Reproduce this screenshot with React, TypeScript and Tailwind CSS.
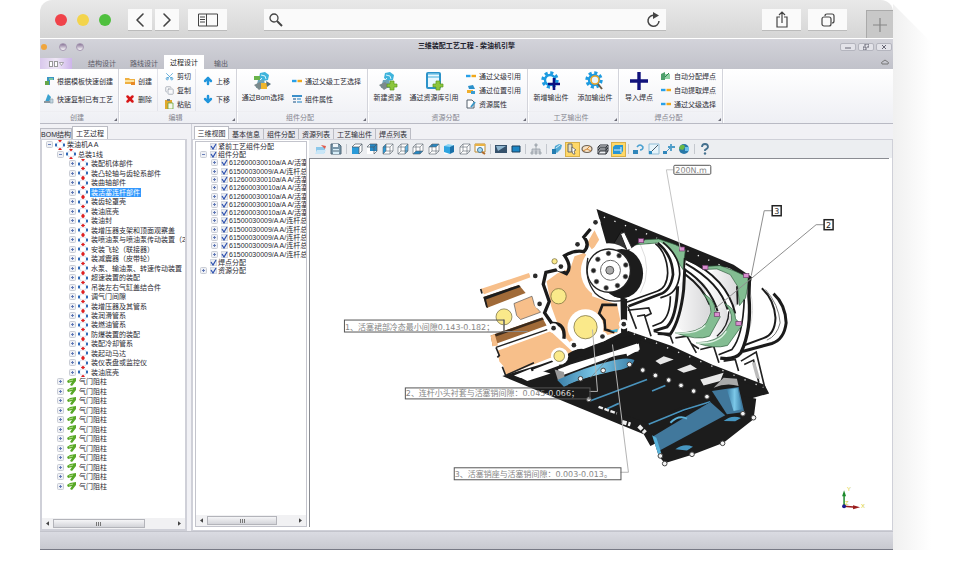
import type { ReactNode } from "react";
import { Copy, Scissors, ChevronLeft, ChevronRight, X, ArrowUp, ArrowDown } from "lucide-react";

const processRows = [
  "装配机体部件",
  "装凸轮轴与齿轮系部件",
  "装曲轴部件",
  "装活塞连杆部件",
  "装齿轮罩壳",
  "装油底壳",
  "装油封",
  "装增压器支架和顶面观察盖",
  "装喷油泵与喷油泵传动装置（2",
  "安装飞轮（联接器）",
  "装减震器（皮带轮）",
  "水泵、输油泵、转速传动装置",
  "超速装置的装配",
  "吊装左右气缸盖结合件",
  "调气门间隙",
  "装增压器及其管系",
  "装润滑管系",
  "装燃油管系",
  "防爆装置的装配",
  "装配冷却管系",
  "装起动马达",
  "装仪表盘或监控仪",
  "装油底壳",
];
const valveRows = Array.from({ length: 12 }, () => "气门阻柱");

const piston = "612600030010a/A A/活塞";
const rod = "61500030009/A A/连杆总";
const partRows = [piston, rod, piston, piston, piston, piston, piston, rod, rod, rod, rod, rod];

const viewTabs = ["三维视图", "基本信息", "组件分配", "资源列表", "工艺输出件", "焊点列表"];

/* ---------- icons ---------- */

function GearIcon({ mark }: { mark: "plus" | "lens" }) {
  return (
    <svg viewBox="0 0 20 20" className="size-5">
      <circle cx="9" cy="9" r="7" fill="none" stroke="#1e9be0" strokeWidth="3.4" strokeDasharray="3 2.5" />
      <circle cx="9" cy="9" r="5" fill="#fff" stroke="#1e9be0" strokeWidth="2.4" />
      {mark === "plus" ? (
        <path d="M13 7v12M7 13h12" stroke="#0b1080" strokeWidth="2.600" />
      ) : (
        <>
          <circle cx="10" cy="9" r="4" fill="#e9f6fd" stroke="#eaa528" strokeWidth="1.600" />
          <path d="M13 13l4 5" stroke="#6c5a42" strokeWidth="2" />
        </>
      )}
    </svg>
  );
}

function RobotIcon({ plus }: { plus?: boolean }) {
  return (
    <svg viewBox="0 0 20 20" className="size-5">
      <path d="M7 2l5-1 4 3-1 5-5 1-4-3z" fill="#3fb4dc" />
      <path d="M8 4l4 1 1 3M6 10l3-3" fill="none" stroke="#d7f3fb" />
      <path d="M5 9h6l2 8H3z" fill="#6fa5b8" />
      <path d="M1 14l6-3 5 4-6 4z" fill="#7b8a8c" />
      {plus ? (
        <path d="M12 10h4v3h3v3h-3v3h-4v-3H9v-3h3z" fill="#8cc63c" stroke="#5d9a1c" strokeWidth=".7" />
      ) : (
        <>
          <path d="M1 5h6v4H1z" fill="#69b34a" />
          <path d="M8 12h6v6H8z" fill="#f0b62c" />
          <path d="M13 10l5 3-4 3z" fill="#58707c" />
        </>
      )}
    </svg>
  );
}

function LibraryIcon() {
  return (
    <svg viewBox="0 0 20 20" className="size-5">
      <rect x="2" y="1" width="15" height="17" rx="2" fill="#2c93c9" />
      <rect x="4" y="3" width="11" height="13" fill="#eaf8fe" />
      <path d="M4 6h11M4 3h11" stroke="#7cc6e8" strokeWidth="1.500" />
      <path d="M12 10h4v3h3v3h-3v3h-4v-3H9v-3h3z" fill="#8cc63c" stroke="#5d9a1c" strokeWidth=".7" />
    </svg>
  );
}

function PlusIcon() {
  return (
    <svg viewBox="0 0 20 20" className="size-5">
      <path d="M10 1v18M1 10h18" stroke="#11127c" strokeWidth="3.400" />
    </svg>
  );
}

function LinkDash() {
  return (
    <svg viewBox="0 0 10 10" className="size-[10px]">
      <path d="M0 5h4.500" stroke="#28a0e8" strokeWidth="2.400" />
      <path d="M5.500 5H10" stroke="#f0a81c" strokeWidth="2.400" />
    </svg>
  );
}

function SheetIcon({ tone }: { tone: "green" | "blue" | "folder" | "paste" | "edit" | "list" | "place" | "weld" }) {
  return (
    <svg viewBox="0 0 10 10" className="size-[10px]">
      {tone === "green" && (
        <>
          <path d="M3 1h7v3H6v5H3z" fill="#3a95c4" />
          <path d="M5 2h4v2H5z" fill="#7cc4a0" />
          <path d="M1 5h4v4H1z" fill="#66a648" />
        </>
      )}
      {tone === "weld" && (
        <>
          <path d="M0 3l4-2v8H0z" fill="#4f9f6c" />
          <path d="M4 3h5v5H4z" fill="#8fd0a4" />
          <path d="M4 6l4-4" stroke="#2f7d4c" />
        </>
      )}
      {tone === "blue" && (
        <>
          <path d="M4 0l3 3-2 5H1z" fill="#3aa2d0" />
          <path d="M0 7h7v2H0z" fill="#8c979e" />
          <path d="M6 5h3v4H6z" fill="#c3d6e2" stroke="#7f97a6" strokeWidth=".6" />
        </>
      )}
      {tone === "folder" && (
        <>
          <path d="M0 2h4l1 1h5v5H0z" fill="#efb041" />
          <path d="M0 4h9v2H0z" fill="#fbe2a0" />
          <path d="M6 6h4v3H6z" fill="#e88a28" />
        </>
      )}
      {tone === "paste" && (
        <>
          <path d="M1 1h7v9H1z" fill="#e0a92e" />
          <path d="M3 0h3v2H3z" fill="#77808a" />
          <path d="M4 4h5v6H4z" fill="#f5f8e8" stroke="#6ca33b" strokeWidth=".8" />
        </>
      )}
      {tone === "edit" && (
        <>
          <path d="M1 1h5l2 2v6H1z" fill="#fff" stroke="#55606c" />
          <path d="M9 3L5 8" stroke="#3b97c7" strokeWidth="2" />
        </>
      )}
      {tone === "list" && (
        <>
          <path d="M0 1h10v2H0z" fill="#3b8fca" />
          <path d="M1 5h3M1 8h3" stroke="#5d84a8" strokeWidth="1.500" />
          <path d="M5 4h4v2H5zM5 7h5v2H5z" fill="#85b9dc" />
        </>
      )}
      {tone === "place" && (
        <>
          <path d="M2 1l5-1 2 4H3z" fill="#2b90ca" />
          <path d="M1 5h6v3H1z" fill="#f0ae2b" />
          <path d="M5 6h4v3H5z" fill="#3a9cd2" />
        </>
      )}
    </svg>
  );
}

function PartIcon() {
  return (
    <svg viewBox="0 0 10 10" className="h-[10px] w-[10px] shrink-0">
      <circle cx="5" cy="5" r="3.500" fill="#fff" stroke="#c3d2ea" strokeWidth=".7" />
      <ellipse cx="1" cy="5" rx="1" ry="1.700" fill="#1d5cb0" />
      <ellipse cx="9" cy="5" rx="1" ry="1.700" fill="#1d5cb0" />
      <path d="M3 0h4L5 2.500zM3 10h4L5 7.500z" fill="#e02020" />
    </svg>
  );
}

function LeafIcon() {
  return (
    <svg viewBox="0 0 10 10" className="h-[10px] w-[10px] shrink-0">
      <path d="M1 4l3-2 6-1v3L6 9 4 8l2-3-4 1z" fill="#58a827" />
      <path d="M3 4l4-1" stroke="#b5df8a" />
    </svg>
  );
}

function CubeIcon({ face }: { face: string }) {
  return (
    <svg viewBox="0 0 12 12" className="size-3">
      <path d="M1 4l3-3h7v7l-3 3H1z" fill="#fff" />
      {face === "front" && <path d="M1 4h7v7H1z" fill="#2a9ad8" />}
      {face === "back" && <path d="M4 1h7v7H4z" fill="#2588c4" />}
      {face === "left" && <path d="M1 4l3-3v7l-3 3z" fill="#2a9ad8" />}
      {face === "right" && <path d="M8 4l3-3v7l-3 3z" fill="#62b4e0" />}
      {face === "bottom" && <path d="M1 11l3-3h7l-3 3z" fill="#2588c4" />}
      {face === "top" && <path d="M1 4l3-3h7L8 4z" fill="#2588c4" />}
      {face === "solid" && (
        <>
          <path d="M1 3h6v8L1 9z" fill="#2ea4e0" />
          <path d="M7 3l4-1v7l-4 2z" fill="#1a70a8" />
          <path d="M1 3l4-2 6 1-4 2z" fill="#8ad2f2" />
        </>
      )}
      {(face === "front" || face === "back") && (
        <path d="M1 4l3-3h7L8 4zM8 4v7l3-3V1" fill="none" stroke="#4c5761" strokeWidth=".7" />
      )}
      {!["solid", "front", "back"].includes(face) && (
        <path d="M1 4h7v7H1zM1 4l3-3h7L8 4M11 1v7l-3 3M4 1v7h7M4 8l-3 3" fill="none" stroke="#59636d" strokeWidth=".6" />
      )}
    </svg>
  );
}

function ToolIcon({ name }: { name: string }) {
  return (
    <svg viewBox="0 0 12 12" className="size-3">
      {name === "open" && (
        <>
          <path d="M1 4h9v6H1z" fill="#8cc8ea" />
          <path d="M2 7h9l-2 4H0z" fill="#c9e6f7" />
          <path d="M6 2l5 1-1 3z" fill="#e05a4a" />
        </>
      )}
      {name === "save" && (
        <>
          <path d="M1 1h8l2 2v8H1z" fill="#7897aa" stroke="#4e6778" />
          <path d="M3 1h5v3H3z" fill="#f0f6fa" />
          <path d="M3 6h6v5H3z" fill="#d6edf8" />
          <path d="M3 8h6" stroke="#4e6778" />
        </>
      )}
      {name === "zoomwin" && (
        <>
          <path d="M1 1h10v8H1z" fill="#f4fbff" stroke="#c08c30" />
          <path d="M1 2h10" stroke="#e8b244" strokeWidth="2" />
          <circle cx="6" cy="7" r="2.500" fill="#a7dcf5" stroke="#477a98" />
          <path d="M8 9l3 2" stroke="#b06a28" strokeWidth="2" />
        </>
      )}
      {name === "screen" && (
        <>
          <path d="M0 2h12v8H0z" fill="#35516b" />
          <path d="M1 3h10L3 8z" fill="#8fb6cf" />
        </>
      )}
      {name === "box" && <path d="M2 3h8v6H2z" fill="#1c86c4" stroke="#1b3e5c" />}
      {name === "tree" && (
        <path d="M6 2v4M2 9V6h8v3M6 6v3M1 9h2v2H1zM5 9h2v2H5zM9 9h2v2H9zM5 1h2v2H5z" fill="#c8ccd2" stroke="#9ba1a8" strokeWidth=".8" />
      )}
      {name === "section" && (
        <>
          <path d="M4 3l4-2 3 1-1 4-4 4-3-2z" fill="#52aad4" />
          <path d="M1 6h4v5H1z" fill="#237cb0" />
          <path d="M5 5l4-3" stroke="#d6f0fc" />
        </>
      )}
      {name === "pick" && (
        <>
          <path d="M2 1h4v8H2z" fill="#e5e0c8" stroke="#666" />
          <path d="M6 4l4 3-2 1 1 3-2 0-1-3z" fill="#fff" stroke="#555" strokeWidth=".7" />
        </>
      )}
      {name === "orbit" && (
        <>
          <ellipse cx="6" cy="6" rx="5" ry="3.500" fill="#f6e1c4" stroke="#6d6256" strokeWidth="1.200" />
          <path d="M6 6l3-3M6 6L2 8M6 6l4 2" stroke="#d08a3c" />
        </>
      )}
      {name === "frame" && (
        <path d="M3 2h8L9 4H1zM3 5h8L9 7H1zM3 8h8l-2 3H1zM1 4v7M9 4v7M11 2v6" stroke="#30343a" fill="none" />
      )}
      {name === "wrap" && (
        <>
          <path d="M1 4l2-2h8v6l-2 3H1z" fill="#2795d4" />
          <path d="M2 7h7M9 4v6" stroke="#d7f1ff" />
        </>
      )}
      {name === "rotate" && (
        <>
          <path d="M0 7h5v4H0z" fill="#3186ba" />
          <path d="M4 4q3-4 6 0q0 3-3 3" fill="none" stroke="#4aa0d0" strokeWidth="1.500" />
        </>
      )}
      {name === "scale" && (
        <>
          <path d="M1 1h10v10H1z" fill="#e6f4fb" stroke="#90bdd6" />
          <path d="M2 10l8-8" stroke="#4b5b68" />
          <path d="M1 8h3v3H1z" fill="#2e8dc4" />
        </>
      )}
      {name === "move" && (
        <>
          <path d="M0 8h4v3H0z" fill="#3186ba" />
          <path d="M8 1v7M5 4h7" stroke="#4d9cc8" strokeWidth="1.800" />
          <path d="M4 8l3-3" stroke="#4d9cc8" />
        </>
      )}
      {name === "globe" && (
        <>
          <circle cx="6" cy="6" r="5" fill="#2878a8" />
          <path d="M2 3q4-3 5 1l-2 3-4-1z" fill="#6cba44" />
          <path d="M7 4h4v4H7z" fill="#6cc0ea" />
        </>
      )}
      {name === "help" && (
        <>
          <path d="M3 4q0-3 3-3t3 3q0 1-3 3v1" fill="none" stroke="#44708e" strokeWidth="1.800" />
          <circle cx="6" cy="10.500" r="1.200" fill="#44708e" />
        </>
      )}
    </svg>
  );
}

/* ---------- ribbon ---------- */

function Group({ label, className, children }: { label: string; className: string; children: ReactNode }) {
  return (
    <section className={`flex shrink-0 flex-col border-r border-[#d3d4db] shadow-[1px_0_0_#fff] ${className}`}>
      <div className="flex h-[43px]">{children}</div>
      <footer className="flex h-3 items-center border-t border-[#eeeef2] text-[#85858f]">
        <span className="flex-1 text-center">{label}</span>
        <svg viewBox="0 0 4 4" className="mt-1 mr-px size-[3px]">
          <path d="M4 0v4H0z" fill="#6d6d78" />
        </svg>
      </footer>
    </section>
  );
}

function Small({ icon, text }: { icon: ReactNode; text: string }) {
  return (
    <button className="flex flex-1 items-center gap-[3px] text-left">
      <span className="flex w-[10px] shrink-0 justify-center">{icon}</span>
      {text}
    </button>
  );
}

function Big({ icon, text, className }: { icon: ReactNode; text: string; className: string }) {
  return (
    <button className={`flex shrink-0 flex-col items-center gap-[2px] pt-[2px] ${className}`}>
      {icon}
      {text}
    </button>
  );
}

function Ribbon() {
  return (
    <div className="flex h-[55px] shrink-0 overflow-hidden border-b border-[#b9bac4] bg-linear-to-b from-white to-[#eeeff4]">
      <Group label="创建" className="w-[79px]">
        <div className="flex flex-col py-[3px] pl-1">
          <Small icon={<SheetIcon tone="green" />} text="根据模板快速创建" />
          <Small icon={<SheetIcon tone="blue" />} text="快速复制已有工艺" />
        </div>
      </Group>
      <Group label="编辑" className="w-[118px]">
        <div className="flex w-[39px] flex-col border-r border-[#e2e3ea] py-[3px] pl-[6px]">
          <Small icon={<SheetIcon tone="folder" />} text="创建" />
          <Small icon={<X className="size-[10px] text-[#d81818]" strokeWidth={6} />} text="删除" />
        </div>
        <div className="flex w-[38px] flex-col border-r border-[#e2e3ea] pl-[6px]">
          <Small icon={<Scissors className="size-[9px] -rotate-90 text-[#3d9bd2]" />} text="剪切" />
          <Small icon={<Copy className="size-[9px] text-[#9aa2ac]" />} text="复制" />
          <Small icon={<SheetIcon tone="paste" />} text="粘贴" />
        </div>
        <div className="flex flex-col py-[3px] pl-[7px]">
          <Small icon={<ArrowUp className="size-[10px] text-[#2095dc]" strokeWidth={6} />} text="上移" />
          <Small icon={<ArrowDown className="size-[10px] text-[#2095dc]" strokeWidth={6} />} text="下移" />
        </div>
      </Group>
      <Group label="组件分配" className="w-[131px]">
        <Big icon={<RobotIcon />} text="通过Bom选择" className="w-[52px]" />
        <div className="flex flex-col py-[3px] pl-[3px]">
          <Small icon={<LinkDash />} text="通过父级工艺选择" />
          <Small icon={<SheetIcon tone="list" />} text="组件属性" />
        </div>
      </Group>
      <Group label="资源分配" className="w-[160px]">
        <Big icon={<RobotIcon plus />} text="新建资源" className="w-[39px]" />
        <Big icon={<LibraryIcon />} text="通过资源库引用" className="w-[54px]" />
        <div className="flex flex-col pl-[5px]">
          <Small icon={<LinkDash />} text="通过父级引用" />
          <Small icon={<SheetIcon tone="place" />} text="通过位置引用" />
          <Small icon={<SheetIcon tone="edit" />} text="资源属性" />
        </div>
      </Group>
      <Group label="工艺输出件" className="w-[91px]">
        <Big icon={<GearIcon mark="plus" />} text="新增输出件" className="w-[46px]" />
        <Big icon={<GearIcon mark="lens" />} text="添加输出件" className="w-[42px]" />
      </Group>
      <Group label="焊点分配" className="w-[104px]">
        <Big icon={<PlusIcon />} text="导入焊点" className="w-[40px]" />
        <div className="flex flex-col pl-[2px]">
          <Small icon={<SheetIcon tone="weld" />} text="自动分配焊点" />
          <Small icon={<LinkDash />} text="自动提取焊点" />
          <Small icon={<LinkDash />} text="通过父级选择" />
        </div>
      </Group>
    </div>
  );
}

/* ---------- trees ---------- */

function Expander({ open }: { open?: boolean }) {
  return (
    <svg viewBox="0 0 7 7" className="size-[7px] shrink-0">
      <rect x=".5" y=".5" width="6" height="6" rx="1" fill="#eef0f5" stroke="#c9ccd4" />
      <path d={open ? "M2 3.500h3" : "M2 3.500h3M3.500 2v3"} stroke="#5872b2" strokeWidth=".9" />
    </svg>
  );
}

function HScroll({ thumb }: { thumb: string }) {
  return (
    <div className="flex h-[11px] shrink-0 items-center bg-[#f1f1f3] px-1">
      <svg viewBox="0 0 4 6" className="h-[5px] w-[3px]">
        <path d="M4 0v6L0 3z" fill="#444" />
      </svg>
      <div className="flex flex-1 px-1">
        <div className={`flex h-[9px] items-center justify-center gap-px border border-[#b3b4ba] bg-linear-to-b from-[#f5f5f7] to-[#d3d4d9] ${thumb}`}>
          <i className="h-1 w-px bg-[#777]" />
          <i className="h-1 w-px bg-[#777]" />
          <i className="h-1 w-px bg-[#777]" />
        </div>
      </div>
      <svg viewBox="0 0 4 6" className="h-[5px] w-[3px]">
        <path d="M0 0v6l4-3z" fill="#444" />
      </svg>
    </div>
  );
}

function ProcessTree() {
  return (
    <ul className="grid h-[351px] auto-rows-fr whitespace-nowrap">
      <li className="flex items-center gap-[2px] pl-[4px]">
        <Expander open />
        <PartIcon />
        柴油机A A
      </li>
      <li className="flex items-center gap-[2px] pl-[15px]">
        <Expander open />
        <PartIcon />
        总装1线
      </li>
      {processRows.map((row, i) => (
        <li key={i} className="flex items-center gap-[2px] pl-[27px]">
          <Expander />
          <PartIcon />
          <span className={i === 3 ? "bg-[#3298fd] px-px text-white" : "px-px"}>{row}</span>
        </li>
      ))}
      {valveRows.map((row, i) => (
        <li key={i} className="flex items-center gap-[2px] pl-[15px]">
          <Expander />
          <LeafIcon />
          <span className="px-px">{row}</span>
        </li>
      ))}
    </ul>
  );
}

function CheckRow({ text, indent, expander }: { text: string; indent: string; expander?: "open" | "closed" }) {
  return (
    <li className={`flex items-center gap-[3px] ${indent}`}>
      {expander ? <Expander open={expander === "open"} /> : <span className="w-[7px] shrink-0" />}
      <label className="flex items-center gap-px">
        <span className="grid size-[7px] shrink-0 place-items-center">
          <input
            type="checkbox"
            defaultChecked
            className="peer col-start-1 row-start-1 size-[7px] appearance-none border border-[#d3d7df] bg-[#e9ecf3]"
          />
          <svg viewBox="0 0 7 7" className="pointer-events-none invisible col-start-1 row-start-1 size-[7px] peer-checked:visible">
            <path d="M1 3l2 3 3-5" fill="none" stroke="#2c4fae" strokeWidth="1.200" />
          </svg>
        </span>
        {text}
      </label>
    </li>
  );
}

/* ---------- 3D view ---------- */

const boltsFront = [
  [375, 98], [321, 164], [271, 231], [194, 259], [207, 343], [249, 416], [310, 467], [396, 441], [460, 404],
];
const flangeHoles = [
  [382, 209], [414, 191], [446, 198], [466, 226], [465, 261], [441, 288], [407, 295], [378, 276], [369, 243],
];
const boltsSump = [
  [750, 208], [818, 183], [897, 165], [937, 182], [975, 198], [1015, 212], [1052, 228], [1090, 245], [1130, 262],
  [1238, 313], [1270, 325], [1177, 402], [1085, 435], [1003, 463], [990, 440], [775, 270],
];
const clamps = [[62, 153], [185, 178], [255, 233], [378, 258], [290, 375], [355, 402]];

function Engine() {
  return (
    <svg viewBox="309 160 580 367" className="h-full w-full" role="img" aria-label="柴油机三维模型">
      <defs>
        <linearGradient id="metal" x1="0" x2="1">
          <stop offset="0" stopColor="#fff" />
          <stop offset="1" stopColor="#d4d4d6" />
        </linearGradient>
        <linearGradient id="steel" x1="0" x2="1">
          <stop offset="0" stopColor="#3b7fa8" />
          <stop offset=".5" stopColor="#7cc8e8" />
          <stop offset="1" stopColor="#3b7fa8" />
        </linearGradient>
      </defs>
      <g transform="translate(470 190) scale(.3333)">
        {/* upper rail and underside */}
        <path d="M378 58L600 147L790 225L845 262L838 300L640 210L470 185L420 205z" fill="#1c1c1c" />
        <path d="M95 560L210 525L310 490L400 455L452 430L450 320L472 330L500 430L885 590L897 612L850 625L720 680L540 770L520 735z" fill="#1c1c1c" />
        <path d="M400 82L560 145M620 170L780 240" stroke="#eee" strokeWidth="4" strokeDasharray="4 30" />
        <path d="M425 170L455 120L472 180z" fill="#333" stroke="#111" strokeWidth="3" />
        <path d="M450 132L462 128L486 178L470 182z" fill="#fff" stroke="#222" strokeWidth="3" />

        {/* crankshaft */}
        <g transform="translate(450 0)">
          <path d="M25 180L110 155Q170 190 165 270L150 340L200 420L300 490L370 480L400 300L330 240L180 230z" fill="#fff" />
          <path d="M20 330L20 425L430 596L410 487L370 480L280 440L160 330L100 300z" fill="#fff" />
          <path d="M22 350L48 418M22 362L85 355L92 372L75 380M50 380L72 376L92 440M100 425L150 440L158 462M165 445L200 440L228 490M212 462L236 478M240 480L280 470L296 520M310 515L345 510L355 545M362 515L408 488L434 596M372 525L400 512L416 580" fill="none" stroke="#222" strokeWidth="5" />
          <path d="M395 520L405 518L420 570L408 566z" fill="#bbb" />
          <path d="M20 430L150 475L280 535L428 592" fill="none" stroke="#1c1c1c" strokeWidth="14" />
          <path d="M40 433L420 590" stroke="#ddd" strokeWidth="4" strokeDasharray="4 32" />

          <ellipse cx="70" cy="245" rx="66" ry="84" fill="#fff" />
          <path d="M60 165Q98 240 60 310" fill="none" stroke="#ddd" strokeWidth="3" />
          <ellipse cx="215" cy="350" rx="66" ry="82" fill="url(#metal)" />
          <ellipse cx="310" cy="300" rx="55" ry="68" fill="url(#metal)" />
          <ellipse cx="300" cy="405" rx="42" ry="50" fill="url(#metal)" />
          <path d="M388 300Q408 360 385 430" fill="none" stroke="#ddd" strokeWidth="3" />

          <g fill="#83bd92" stroke="#2f5c3c" strokeWidth="2">
            <path d="M48 165L75 150L115 148L165 165L195 180L188 240L172 215L150 180L110 160z" />
            <path d="M240 240L265 230L300 228L345 245L388 265L376 325L358 348L352 290L330 255L290 238z" />
          </g>

          {/* front web */}
          <path d="M105 162Q140 190 142 250Q140 295 112 305L20 335L24 352L150 318Q178 290 178 250Q172 190 120 158z" fill="#fff" />
          <path d="M105 162Q140 190 142 250Q140 295 110 305L18 338" fill="none" stroke="#1b1b1b" strokeWidth="5" />
          <path d="M112 160Q156 195 158 255Q150 305 118 314L24 350" fill="none" stroke="#1b1b1b" strokeWidth="8" />
          <path d="M128 158Q180 200 178 255Q172 305 140 318L120 325" fill="none" stroke="#1b1b1b" strokeWidth="5" />
          <path d="M150 320Q150 380 122 400L96 410" fill="none" stroke="#1b1b1b" strokeWidth="5" />
          <path d="M172 290Q168 385 140 412L100 424" fill="none" stroke="#1b1b1b" strokeWidth="9" />
          <path d="M195 205L190 300Q180 390 150 434L112 432" fill="none" stroke="#1b1b1b" strokeWidth="9" />

          {/* middle webs */}
          <path d="M196 212Q320 260 345 370L325 380Q300 280 194 236z" fill="#fff" />
          <path d="M200 210Q320 265 345 372M196 222Q300 280 322 360M194 240Q270 290 292 365M192 252Q250 295 268 345" fill="none" stroke="#1b1b1b" strokeWidth="6" />
          <path d="M326 365Q325 410 290 440" fill="none" stroke="#1b1b1b" strokeWidth="4" />
          <path d="M388 262L386 320Q395 420 362 490Q345 512 300 506" fill="none" stroke="#1b1b1b" strokeWidth="10" />
          <path d="M350 290L352 345M372 330Q368 440 335 480L295 496" fill="none" stroke="#1b1b1b" strokeWidth="5" />

          {/* rear web */}
          <path d="M425 296Q462 330 466 385Q464 435 430 446L370 468" fill="none" stroke="#1b1b1b" strokeWidth="6" />
          <path d="M460 312Q496 345 498 400Q492 450 455 462L366 486" fill="none" stroke="#1b1b1b" strokeWidth="9" />
          <path d="M436 300Q476 345 480 400Q470 440 440 452" fill="none" stroke="#777" strokeWidth="3" />

          <g fill="#83bd92" stroke="#2f5c3c" strokeWidth="2">
            <path d="M248 312Q285 330 284 362L300 382L268 440Q230 455 165 430Q235 432 258 400L272 368Q272 340 248 312z" />
            <path d="M313 342Q345 355 346 388L365 408L322 468Q280 480 228 460Q295 458 318 420L334 392Q336 365 313 342z" />
          </g>
          <path d="M165 430Q230 435 255 408M228 460Q295 465 318 425" fill="none" stroke="#dff2e4" strokeWidth="4" />
          {clamps.map(([x, y]) => (
            <rect key={x} x={x - 8} y={y - 6} width="16" height="12" fill="#d98fd0" stroke="#6d3a68" strokeWidth="2" />
          ))}
        </g>

        {/* cylinder bank */}
        <path d="M30 298L175 250L180 263L40 314z" fill="#f7bf8a" />
        <path d="M30 298L34 312" fill="none" stroke="#222" strokeWidth="5" />
        <path d="M38 322L145 286L165 310L48 355z" fill="#a06a38" />
        <path d="M38 322L145 286L150 292L46 330L52 355L46 352z" fill="#1d1d1d" />
        <path d="M130 342L184 320L192 348L210 368L150 390L138 378z" fill="#f7bf8a" stroke="#555" strokeWidth="2" />
        <path d="M60 438L215 384L228 408L78 462L66 470z" fill="#a06a38" />
        <path d="M72 434L215 384L220 390L76 441z" fill="#3a2a1c" />
        <path d="M60 438L72 434L82 468L66 470z" fill="#f7bf8a" />
        <path d="M76 474L230 420" stroke="#222" strokeWidth="4" />
        <path d="M80 484L240 425L315 495L240 505L105 558L98 530L86 516z" fill="#f7bf8a" />
        <path d="M76 474L86 498L80 504M95 532L105 558L190 520" fill="none" stroke="#222" strokeWidth="5" />
        <path d="M130 558L180 538L184 548L150 566zM188 540L262 512L266 528L192 556z" fill="#fff" />

        {/* front plate */}
        <path d="M228 275L262 250L300 235L312 200L340 190L362 205L365 320L440 345L452 405L440 430L300 462L282 440L260 400L242 350z" fill="#f7bf8a" />
        <path d="M350 160L372 122L386 150L366 182z" fill="#f7bf8a" />
        <path d="M360 118L340 142Q360 165 340 186Q312 180 282 198Q306 232 288 252L262 240L226 248L218 284L236 336L222 370L244 402Q286 400 280 448" fill="none" stroke="#1b1b1b" strokeWidth="10" />
        <path d="M440 346L396 346L386 372L402 392L404 420L432 428" fill="none" stroke="#1b1b1b" strokeWidth="8" />
        <path d="M418 424L442 418L440 428z" fill="#46b6da" />
        <circle cx="345" cy="413" r="54" fill="#fff" />
        <path d="M290 510Q325 480 350 495Q380 465 415 478Q450 448 510 450" fill="none" stroke="#1b1b1b" strokeWidth="24" />
        <path d="M300 525L430 485L500 462L505 485L430 500L270 560L262 540z" fill="#fff" />
        <circle cx="267" cy="500" r="26" fill="#fff" />
        <g fill="#fae98a" stroke="#6a6034" strokeWidth="2">
          <circle cx="252" cy="215" r="8" />
          <circle cx="264" cy="320" r="23" />
          <circle cx="345" cy="413" r="35" />
          <circle cx="266" cy="500" r="16" />
          <circle cx="100" cy="382" r="24" />
        </g>
        {boltsFront.map(([x, y]) => (
          <g key={x}>
            <circle cx={x} cy={y} r="15" fill="#fff" />
            <circle cx={x} cy={y} r="7" fill="#2b2b2b" />
          </g>
        ))}

        {/* flange */}
        <circle cx="415" cy="245" r="84" fill="#fff" />
        <path d="M352 205Q340 270 375 312Q410 345 465 330" fill="none" stroke="#222" strokeWidth="4" />
        <ellipse cx="454" cy="252" rx="64" ry="74" fill="#1c1c1c" />
        <circle cx="415" cy="243" r="65" fill="#fff" stroke="#222" strokeWidth="4" />
        <circle cx="420" cy="242" r="30" fill="#fff" stroke="#666" strokeWidth="3" />
        <circle cx="418" cy="242" r="12" fill="#aaa" stroke="#555" strokeWidth="3" />
        {flangeHoles.map(([x, y]) => (
          <circle key={x} cx={x} cy={y} r="7" fill="#222" stroke="#777" strokeWidth="2" />
        ))}

        {/* oil pan */}
        <g transform="translate(-420 360)">
          <path d="M560 200L620 180L660 192L590 215zM885 120L925 102L928 120L890 140z" fill="#fff" />
          <path d="M975 155L1000 140L1030 150L990 165zM1040 180L1080 165L1100 178L1060 190zM1110 210L1180 190L1170 215L1120 228z" fill="#e8e8e8" />
          <path d="M805 290L860 310M875 338L900 345M925 350L945 370" stroke="#eee" strokeWidth="12" strokeDasharray="14 5" />
          <path d="M672 180L700 188L705 225L682 212z" fill="#999" />
          <path d="M680 212Q760 175 830 158Q890 140 912 152Q905 178 850 185Q760 205 700 232z" fill="url(#steel)" />
          <path d="M712 226Q770 200 840 190L900 175L1120 262L950 340L780 280z" fill="#1c1c1c" />
          <path d="M780 274L950 210M965 245L1005 228M830 298L865 282M955 345L1060 302L1140 277" stroke="#4a94bd" strokeWidth="5" />
          <path d="M780 205L835 145" stroke="#7c7c7c" strokeWidth="2" />
          <path d="M965 375L1145 275L1150 240L1225 232L1240 260L1278 268L1270 330L1180 400L1090 435L1003 462L985 440z" fill="#1c1c1c" />
          <path d="M970 380L1140 278L1185 318L985 425z" fill="#41789c" />
          <path d="M1145 245L1225 233L1242 308L1190 315z" fill="#41789c" />
          <path d="M1190 240L1222 236L1236 300L1210 305z" fill="url(#steel)" />
          <path d="M965 378L985 440L992 430L978 385z" fill="#58b4dc" />
          <path d="M1035 420Q1060 400 1088 412L1070 424zM1180 335Q1205 315 1232 326L1215 336z" fill="#4796c0" />
          <path d="M1020 340Q1045 315 1070 328" fill="none" stroke="#5cb2da" strokeWidth="6" />
          <path d="M1150 235Q1190 218 1225 230L1220 208L1180 205z" fill="#aaa" />
          {boltsSump.map(([x, y]) => (
            <circle key={x} cx={x} cy={y} r="7" fill="#f4f4f4" stroke="#444" strokeWidth="3" />
          ))}
        </g>
      </g>

      {/* callouts */}
      <g fill="none" stroke="#8e8e8e" strokeWidth="1">
        <path d="M673 170h-7L680 250" stroke="#c4c4c4" />
        <path d="M772 211h-8L751 276" />
        <path d="M824 225h-8L716 308" />
        <path d="M503 320v12h24" />
        <path d="M592 330L597 392h-8" stroke="#b4b4b4" />
        <path d="M612 345L628 473h-8" stroke="#b4b4b4" />
      </g>
      <g fill="none" stroke="#555">
        <rect x="673.500" y="165.500" width="37" height="9" rx="1" />
        <rect x="343.500" y="320.500" width="160" height="12" />
        <rect x="404.500" y="388.500" width="185" height="11" />
        <rect x="453.500" y="468.500" width="167" height="12" />
      </g>
      <g fill="#fff" stroke="#222" strokeWidth="1.500">
        <rect x="772" y="206" width="9" height="10" />
        <rect x="824" y="220" width="9" height="10" />
      </g>
      <g fill="#858585" fontSize="8" fontFamily="'DejaVu Sans', 'Noto Sans CJK SC', sans-serif">
        <text x="675" y="173">200N.m</text>
        <text x="344" y="330">1、活塞裙部冷态最小间隙0.143-0.182；</text>
        <text x="405" y="397">
          2、连杆小头衬套与活塞销间隙：0.045
          <tspan fill="#dcdcdc">-0.066；</tspan>
        </text>
        <text x="454" y="478">3、活塞销座与活塞销间隙：0.003-0.013。</text>
        <text x="774" y="214" fill="#222">3</text>
        <text x="826" y="228" fill="#222">2</text>
      </g>

      {/* axes */}
      <path d="M844 507V494" stroke="#1c8a2c" strokeWidth="1.500" />
      <path d="M842 497l2-6 2 6z" fill="#1c8a2c" />
      <path d="M844 507l12 1" stroke="#9a1c1c" strokeWidth="1.500" />
      <path d="M853 506l7 2-7 2z" fill="#9a1c1c" />
      <circle cx="844" cy="507" r="2" fill="#1c1c90" />
      <g fill="#d8d030" fontSize="6" fontFamily="'Liberation Sans', sans-serif">
        <text x="847" y="492">Y</text>
        <text x="861" y="509">X</text>
        <text x="845" y="506">Z</text>
      </g>
    </svg>
  );
}

function ToolGroup({ names, className }: { names: string[]; className: string }) {
  return (
    <div className={`flex shrink-0 items-center justify-around ${className}`}>
      {names.map((name) => (
        <button
          key={name}
          aria-label={name}
          className={`flex h-[15px] w-[15px] items-center justify-center ${
            name === "pick" || name === "wrap" ? "border border-[#d8b04a] bg-[#ffd868]" : ""
          }`}
        >
          {["front", "back", "left", "right", "bottom", "top", "solid", "wire"].includes(name) ? (
            <CubeIcon face={name} />
          ) : (
            <ToolIcon name={name} />
          )}
        </button>
      ))}
    </div>
  );
}

function Divider() {
  return <span className="mx-[2px] h-[10px] w-px shrink-0 bg-[#c4c8ce]" />;
}

/* ---------- window frames ---------- */

function BrowserBar() {
  return (
    <header className="flex h-[38px] shrink-0 items-start rounded-t-xl bg-linear-to-b from-[#e9e9e9] to-[#d5d5d5] pt-[9px] pl-[15px] text-[#444]">
      <div className="mt-[5px] flex gap-[10px]">
        <span className="size-3 rounded-full bg-[#f0434a]" />
        <span className="size-3 rounded-full bg-[#f3d44c]" />
        <span className="size-3 rounded-full bg-[#4fc03e]" />
      </div>
      <div className="ml-[17px] flex gap-[3px]">
        <button aria-label="后退" className="flex h-[22px] w-6 items-center justify-center border-b border-[#bbb] bg-[#fafafa]">
          <ChevronLeft className="size-6 shrink-0" strokeWidth={1.6} />
        </button>
        <button aria-label="前进" className="flex h-[22px] w-6 items-center justify-center border-b border-[#bbb] bg-[#fafafa]">
          <ChevronRight className="size-6 shrink-0" strokeWidth={1.6} />
        </button>
      </div>
      <button aria-label="边栏" className="ml-[9px] flex h-[22px] w-[39px] items-center justify-center border-b border-[#bbb] bg-[#fafafa]">
        <svg viewBox="0 0 20 14" className="h-[14px] w-5" fill="none" stroke="#444">
          <path d="M.5 1h19v12H.5zM8.500 1v12M2 4h5M2 6.500h5M2 9h5" />
        </svg>
      </button>
      <label className="ml-[37px] flex h-[22px] flex-1 items-center border-b border-[#bbb] bg-[#fafafa] px-[5px]">
        <svg viewBox="0 0 14 14" className="size-[14px]" fill="none" stroke="#444">
          <circle cx="5" cy="5" r="4" strokeWidth="1.300" />
          <path d="M8 8l5 5" strokeWidth="2" />
        </svg>
        <input aria-label="地址" className="min-w-0 flex-1 bg-transparent px-1 text-xs outline-none" />
        <svg viewBox="0 0 15 16" className="h-4 w-[15px]" fill="none" stroke="#444" strokeWidth="1.500">
          <path d="M9 3.500A5.500 5.500 0 1 0 13 9" />
          <path d="M7 0l6 3.500L7 7z" fill="#444" stroke="none" />
        </svg>
      </label>
      <button aria-label="分享" className="ml-24 flex h-[22px] w-[39px] items-center justify-center border-b border-[#bbb] bg-[#fafafa]">
        <svg viewBox="0 0 12 17" className="h-[17px] w-3" fill="none" stroke="#444" strokeWidth="1.200">
          <path d="M4 6H1v10h10V6H8M6 12V1M3 4l3-3 3 3" />
        </svg>
      </button>
      <button aria-label="标签页" className="ml-[7px] flex h-[22px] w-[39px] items-center justify-center border-b border-[#bbb] bg-[#fafafa]">
        <svg viewBox="0 0 14 14" className="size-[14px]" fill="none" stroke="#444" strokeWidth="1.200">
          <rect x="1" y="4" width="9" height="9" rx="2" />
          <path d="M4 3q0-2 2-2h5q2 0 2 2v5q0 2-2 2" />
        </svg>
      </button>
      <button aria-label="新标签页" className="mt-px ml-[19px] flex h-7 w-[27px] items-center justify-center border-t border-l border-[#aaa] bg-[#c8c8c8]">
        <svg viewBox="0 0 14 14" className="size-[14px]">
          <path d="M7 0v14M0 7h14" stroke="#858585" strokeWidth="1.200" />
        </svg>
      </button>
    </header>
  );
}

function TitleBar() {
  return (
    <div className="mt-px shrink-0 bg-linear-to-b from-[#d3d3da] to-[#c1c2ca]">
      <div className="flex h-4 items-center justify-between">
        <div className="flex w-[72px] items-center pl-px">
          <span className="size-[6px] rounded-full bg-[#f0a53c]" />
          <span className="ml-3 size-2 rounded-full border border-[#a698b2] bg-linear-to-b from-[#8a7698] to-white" />
          <span className="ml-[9px] size-2 rounded-full border border-[#a698b2] bg-linear-to-b from-[#8a7698] to-white" />
        </div>
        <h1 className="pb-[3px] text-[7px] font-bold text-[#20202c]">三维装配工艺工程 - 柴油机引擎</h1>
        <div className="flex w-[72px] justify-end gap-[2px] pr-px">
          {["最小化", "还原", "关闭"].map((name, i) => (
            <button key={name} aria-label={name} className="flex h-2 w-4 items-center justify-center rounded-xs border border-[#b4b5be] bg-[#e3e3e9]">
              <svg viewBox="0 0 6 6" className="size-[6px]" fill="none" stroke="#666674">
                <path d={["M0 4h6", "M0 3h3v3H0zM2 2V0h4v3H4", "M1 1l4 4M5 1L1 5"][i]} />
              </svg>
            </button>
          ))}
        </div>
      </div>
      <nav className="flex h-[14px] items-end text-[#5a5a66]">
        <button className="mr-2 flex h-[11px] w-8 items-center justify-center gap-px bg-linear-to-r from-[#d9c8ec] via-[#efe8f6] to-[#cdb4ea]">
          <i className="h-[6px] w-1 border border-[#999] bg-white" />
          <i className="h-[6px] w-1 border border-[#999] bg-white" />
          <svg viewBox="0 0 5 4" className="h-1 w-[5px]">
            <path d="M.5 .5h4L2.500 3.500z" fill="#fff" stroke="#888" strokeWidth=".7" />
          </svg>
        </button>
        <button className="h-3 w-[44px]">结构设计</button>
        <button className="h-3 w-[40px]">路线设计</button>
        <button className="h-[14px] w-[40px] bg-white text-[#222]">过程设计</button>
        <button className="h-3 w-[34px]">输出</button>
        <svg viewBox="0 0 8 6" className="mr-1 mb-1 ml-auto h-[6px] w-2" fill="none" stroke="#777">
          <path d="M1 5L0.500 3.500L4 1l3.500 2.500L7 5z" />
        </svg>
      </nav>
    </div>
  );
}

export default function App() {
  return (
    <div className="flex min-h-screen bg-white pb-[14px] pl-10 font-['Liberation_Sans','Noto_Sans_CJK_SC',sans-serif] text-[7px] leading-[9px] text-[#2b2b33]">
      <div className="flex min-w-0 flex-1 flex-col">
        <BrowserBar />
        <TitleBar />
        <Ribbon />
        <main className="flex flex-1 bg-[#f1f1f5]">
          <aside className="mr-1 flex w-[147px] shrink-0 flex-col pt-[2px]">
            <div role="tablist" className="flex h-[13px] items-end">
              <button role="tab" className="h-[11px] w-[32px] border border-b-0 border-[#bbbcc4] bg-[#e9e9ee]">BOM结构</button>
              <button role="tab" aria-selected className="h-[13px] w-9 border border-b-0 border-[#bbbcc4] bg-white">
                工艺过程
              </button>
            </div>
            <div className="flex flex-1 flex-col overflow-hidden border-2 border-t border-[#cfd0d8] bg-white">
              <ProcessTree />
              <div className="flex-1" />
              <HScroll thumb="w-[76%]" />
            </div>
          </aside>
          <section className="flex min-w-0 flex-1 flex-col border-l border-[#cfd0d8] pt-[2px]">
            <div role="tablist" className="flex h-[13px] items-end pl-[2px]">
              {viewTabs.map((tab, i) => (
                <button
                  key={tab}
                  role="tab"
                  aria-selected={i === 0}
                  className={
                    i === 0
                      ? "h-[13px] w-[35px] border border-b-0 border-[#bbbcc4] bg-white"
                      : "h-[11px] border-t border-r border-[#bbbcc4] bg-[#e9e9ee] px-[3px]"
                  }
                >
                  {tab}
                </button>
              ))}
            </div>
            <div className="flex min-h-0 flex-1 border border-[#cfd0d8] bg-white">
              <div className="mt-px mb-[3px] ml-[2px] flex w-[112px] shrink-0 flex-col overflow-hidden border border-[#c3c4cc]">
                <ul className="grid h-[133px] auto-rows-fr whitespace-nowrap">
                  <CheckRow text="紧前工艺组件分配" indent="pl-[4px]" />
                  <CheckRow text="组件分配" indent="pl-[4px]" expander="open" />
                  {partRows.map((row, i) => (
                    <CheckRow key={i} text={row} indent="pl-[15px]" expander="closed" />
                  ))}
                  <CheckRow text="焊点分配" indent="pl-[4px]" />
                  <CheckRow text="资源分配" indent="pl-[4px]" expander="closed" />
                </ul>
                <div className="flex-1" />
                <HScroll thumb="w-[80%]" />
              </div>
              <div className="ml-[2px] flex min-w-0 flex-1 flex-col">
                <div className="flex h-[18px] shrink-0 items-center bg-[#eceef1] pl-1">
                  <ToolGroup names={["open", "save"]} className="w-[31px]" />
                  <Divider />
                  <ToolGroup
                    names={["front", "back", "left", "right", "bottom", "top", "solid", "wire", "zoomwin"]}
                    className="w-[139px]"
                  />
                  <Divider />
                  <ToolGroup names={["screen", "box"]} className="w-[30px]" />
                  <Divider />
                  <ToolGroup names={["tree"]} className="w-4" />
                  <Divider />
                  <ToolGroup names={["section", "pick", "orbit", "frame", "wrap"]} className="w-[77px]" />
                  <Divider />
                  <ToolGroup names={["rotate", "scale", "move", "globe"]} className="w-[61px]" />
                  <Divider />
                  <ToolGroup names={["help"]} className="w-[15px]" />
                </div>
                <div className="mr-[3px] mb-[3px] h-0 min-h-[368px] flex-1 border-t border-l border-[#8a8c92] bg-white">
                  <Engine />
                </div>
              </div>
            </div>
          </section>
        </main>
        <footer className="h-[19px] shrink-0 border-t border-b border-t-[#c3c4cc] border-b-[#777985] bg-linear-to-b from-[#dadbe2] to-[#c8c9d0]" />
      </div>
      <div className="w-[82px] shrink-0">
        <div className="h-full w-[38px] bg-linear-to-r from-[#f0f0f0] to-white [clip-path:polygon(0_4px,100%_42px,100%_100%,0_100%)]" />
      </div>
    </div>
  );
}
